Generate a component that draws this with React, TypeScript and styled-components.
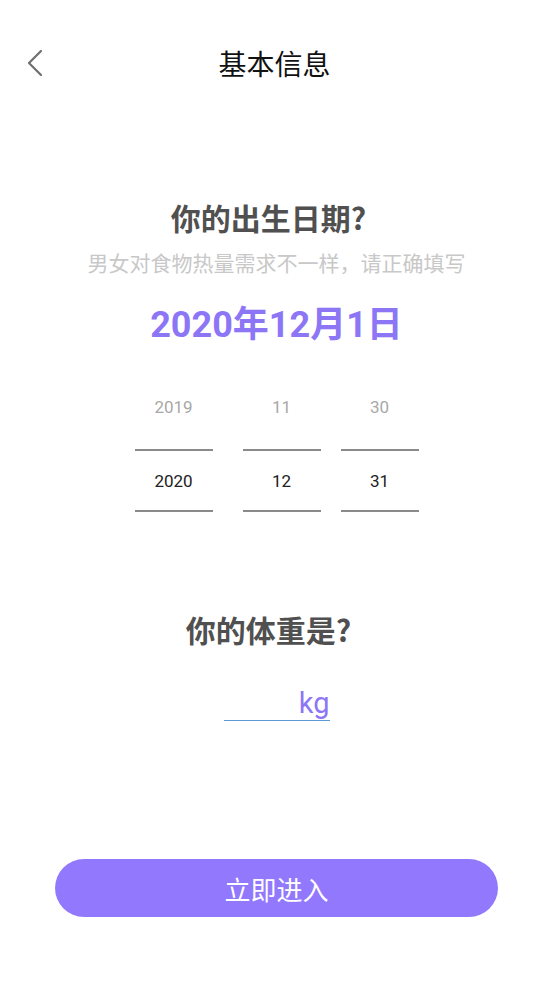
import styled, { createGlobalStyle } from 'styled-components';

const GlobalStyle = createGlobalStyle`
  html, body {
    margin: 0;
    padding: 0;
    background: #ffffff;
  }
  body {
    font-family: Roboto, "Noto Sans CJK SC", sans-serif;
  }
`;

const Page = styled.div`
  width: 553px;
  height: 983px;
  background: #ffffff;
  display: flex;
  flex-direction: column;
  align-items: center;
  overflow: hidden;
`;

const Header = styled.div`
  position: relative;
  width: 100%;
  height: 60px;
  margin-top: 33px;
  display: flex;
  align-items: center;
  justify-content: center;
`;

const BackButton = styled.div`
  position: absolute;
  left: 24px;
  top: 16px;
  width: 22px;
  height: 28px;
  display: flex;
  align-items: center;
  justify-content: center;
`;

const Title = styled.div`
  font-family: "Noto Sans CJK SC", sans-serif;
  font-size: 28px;
  color: #111111;
  line-height: 60px;
  padding-right: 4px;
`;

const Question = styled.div<{ $top: number }>`
  margin-top: ${(p) => p.$top}px;
  padding-right: 16px;
  font-family: "Noto Sans CJK SC", sans-serif;
  font-size: 30px;
  font-weight: 700;
  color: #505050;
  line-height: 40px;
`;

const Hint = styled.div`
  margin-top: 10px;
  font-family: "Noto Sans CJK SC", sans-serif;
  font-size: 21px;
  color: #c8c8c8;
  line-height: 30px;
`;

const DateText = styled.div`
  margin-top: 23px;
  font-size: 36px;
  font-weight: 700;
  color: #8c76f6;
  line-height: 50px;
`;

const Picker = styled.div`
  margin-top: 39px;
  display: flex;
`;

const Column = styled.div<{ $gap: number }>`
  width: 78px;
  margin-left: ${(p) => p.$gap}px;
  display: flex;
  flex-direction: column;
`;

const Cell = styled.div<{ $active?: boolean }>`
  box-sizing: border-box;
  width: 100%;
  height: ${(p) => (p.$active ? '59px' : '60px')};
  padding-top: ${(p) => (p.$active ? '0' : '8px')};
  display: flex;
  align-items: ${(p) => (p.$active ? 'center' : 'flex-start')};
  justify-content: center;
  font-size: 17px;
  line-height: 20px;
  color: ${(p) => (p.$active ? '#222222' : '#a8a8a8')};
`;

const Divider = styled.div`
  width: 100%;
  height: 2px;
  background: #8a8a8a;
`;

const WeightRow = styled.div`
  margin-top: 37px;
  width: 106px;
  height: 34px;
  display: flex;
  justify-content: flex-end;
  align-items: center;
  border-bottom: 1px solid #5d9ad8;
`;

const Unit = styled.div`
  font-size: 29px;
  color: #8c76f6;
  line-height: 34px;
`;

const Spacer = styled.div`
  flex: 1;
`;

const EnterButton = styled.div`
  width: 443px;
  height: 58px;
  margin-bottom: 66px;
  border-radius: 29px;
  background: #9278fc;
  color: #ffffff;
  font-family: "Noto Sans CJK SC", sans-serif;
  font-size: 26px;
  display: flex;
  align-items: center;
  justify-content: center;
`;

const columns = [
  { prev: '2019', cur: '2020', gap: 0 },
  { prev: '11', cur: '12', gap: 30 },
  { prev: '30', cur: '31', gap: 20 },
];

export default function App() {
  return (
    <>
      <GlobalStyle />
      <Page>
        <Header>
          <BackButton>
            <svg width="18" height="28" viewBox="0 0 18 28" fill="none">
              <path d="M15 2 L3 14 L15 26" stroke="#6f6f6f" strokeWidth="2.2" strokeLinecap="round" strokeLinejoin="round" />
            </svg>
          </BackButton>
          <Title>基本信息</Title>
        </Header>
        <Question $top={104}>你的出生日期?</Question>
        <Hint>男女对食物热量需求不一样，请正确填写</Hint>
        <DateText>2020年12月1日</DateText>
        <Picker>
          {columns.map((c) => (
            <Column key={c.cur} $gap={c.gap}>
              <Cell>{c.prev}</Cell>
              <Divider />
              <Cell $active>{c.cur}</Cell>
              <Divider />
            </Column>
          ))}
        </Picker>
        <Question $top={97}>你的体重是?</Question>
        <WeightRow>
          <Unit>kg</Unit>
        </WeightRow>
        <Spacer />
        <EnterButton>立即进入</EnterButton>
      </Page>
    </>
  );
}
